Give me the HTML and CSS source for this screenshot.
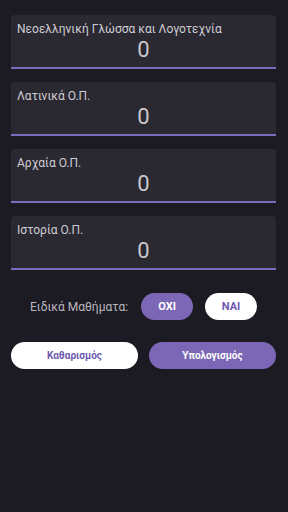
FILE: index.html
```html
<!DOCTYPE html>
<html lang="el">
<head>
    <meta charset="UTF-8">
    <meta name="viewport" content="width=device-width, initial-scale=1.0">
    <title>Υπολογισμός Μορίων</title>
    <link rel="stylesheet" href="styles.css">
</head>
<body>
    <div class="form">
        <div class="field">
            <div class="field-label">Νεοελληνική Γλώσσα και Λογοτεχνία</div>
            <div class="field-value">0</div>
        </div>
        <div class="field">
            <div class="field-label">Λατινικά Ο.Π.</div>
            <div class="field-value">0</div>
        </div>
        <div class="field">
            <div class="field-label">Αρχαία Ο.Π.</div>
            <div class="field-value">0</div>
        </div>
        <div class="field">
            <div class="field-label">Ιστορία Ο.Π.</div>
            <div class="field-value">0</div>
        </div>

        <div class="special">
            <span class="special-label">Ειδικά Μαθήματα:</span>
            <button class="pill filled">ΟΧΙ</button>
            <button class="pill outline">ΝΑΙ</button>
        </div>

        <div class="actions">
            <button class="action outline">Καθαρισμός</button>
            <button class="action filled">Υπολογισμός</button>
        </div>
    </div>
</body>
</html>
```

FILE: styles.css
```css
body {
    font-family: Roboto, 'Noto Sans', sans-serif;
    background-color: #1c1a22;
    color: #e4e2e8;
    margin: 0;
    padding: 0;
}

.form {
    display: flex;
    flex-direction: column;
    padding: 15px 12px 0 11px;
}

.field {
    background-color: #2a2830;
    border-radius: 4px 4px 0 0;
    border-bottom: 2px solid #7b6bbf;
    height: 54px;
    box-sizing: border-box;
    padding: 7px 6px 0 6px;
    margin-bottom: 13px;
}

.field-label {
    font-size: 12px;
    color: #cfcdd4;
    line-height: 15px;
}

.field-value {
    font-size: 22px;
    color: #c9c7cd;
    text-align: center;
    line-height: 26px;
    margin-top: 0;
}

.special {
    display: flex;
    align-items: center;
    justify-content: center;
    margin-top: 10px;
}

.special-label {
    font-size: 12px;
    color: #b9b7be;
    margin-right: 13px;
}

button {
    font-family: inherit;
    border: none;
    cursor: pointer;
    font-weight: bold;
}

.pill {
    width: 52px;
    height: 27px;
    border-radius: 14px;
    font-size: 11px;
    margin-right: 12px;
}

.pill:last-child {
    margin-right: 0;
}

.filled {
    background-color: #7b67b6;
    color: #ffffff;
}

.outline {
    background-color: #ffffff;
    color: #6e5aaf;
}

.actions {
    display: flex;
    justify-content: space-between;
    margin-top: 22px;
}

.action {
    width: 127px;
    height: 27px;
    border-radius: 14px;
    font-size: 10px;
}
```
